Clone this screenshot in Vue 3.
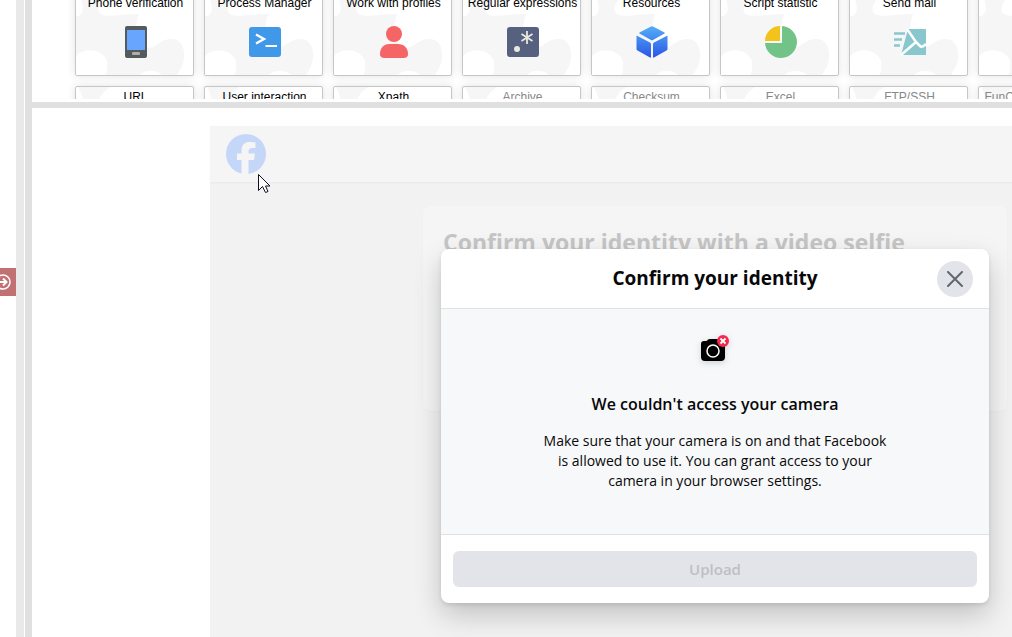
<template>
  <div class="workspace">
    <aside class="sidebar">
      <button class="expand-btn" type="button" aria-label="Expand panel">
        <svg width="16" height="16" viewBox="0 0 16 16" fill="none" stroke="#fff" stroke-width="1.5">
          <circle cx="8" cy="8" r="7" />
          <path d="M3 8h8M8 4.500l3.500 3.500L8 11.500" stroke-width="2" />
        </svg>
      </button>
    </aside>
    <div class="gutter"></div>
    <div class="divider"></div>

    <main class="main">
      <section class="palette">
        <div class="cards">
          <button
            v-for="item in modules"
            :key="item.id"
            type="button"
            class="card"
            :class="{ disabled: item.disabled }"
            :disabled="item.disabled"
          >
            <svg class="puzzle" viewBox="0 0 117 82" fill="#f6f6f6">
              <path d="M0 82V23C7 24 10 14 2 0H34C25 6 21 14 23 19C27 26 42 21 63 21C60 31 58 41 64 50C68 56 75 56 80 52C86 48 90 46 95 46C106 46 109 56 108 65C107 73 104 77 101 82H86C80 76 68 77 64 82H28C32 75 32 70 30 66C25 56 8 54 0 63Z" />
              <path d="M0 67C8 62 26 64 30 73C32 77 31 80 29 82H0Z" fill="#fff" />
            </svg>
            <span class="card-label">{{ item.label }}</span>

            <svg v-if="item.icon === 'phone'" class="card-icon" viewBox="0 0 32 32">
              <rect x="5" y="0" width="22" height="32" rx="2" fill="#555a5c" />
              <rect x="7" y="4" width="18" height="20" fill="#68a5ff" />
              <rect x="12" y="26" width="8" height="3" rx="1" fill="#b3ada8" />
            </svg>
            <svg v-else-if="item.icon === 'terminal'" class="card-icon" viewBox="0 0 32 32">
              <rect x="0" y="1" width="32" height="30" rx="3" fill="#3f98e8" />
              <path d="M7 8.500L15 13L7 17.500" fill="none" stroke="#fff" stroke-width="2.400" />
              <path d="M16.500 20H28" stroke="#fff" stroke-width="2" />
            </svg>
            <svg v-else-if="item.icon === 'profile'" class="card-icon" viewBox="0 0 32 32" fill="#f56565">
              <circle cx="16" cy="8" r="8" />
              <path d="M2 28C2 22 6 18 11 18H20C26 18 30 22 30 28C30 31 28 32 25 32H7C4 32 2 31 2 28Z" />
            </svg>
            <svg v-else-if="item.icon === 'regex'" class="card-icon" viewBox="0 0 32 32">
              <rect x="0" y="1" width="32" height="30" rx="3" fill="#56607f" />
              <circle cx="10" cy="23" r="3" fill="#e9e8df" />
              <path d="M20 5V18M14.500 8L25.500 15M25.500 8L14.500 15" stroke="#e9e8df" stroke-width="1.800" />
            </svg>
            <svg v-else-if="item.icon === 'cube'" class="card-icon" viewBox="0 0 32 32">
              <defs>
                <linearGradient id="cube-fill" gradientUnits="userSpaceOnUse" x1="0" y1="0" x2="0" y2="32">
                  <stop offset="0" stop-color="#54aef8" />
                  <stop offset="1" stop-color="#2b55e5" />
                </linearGradient>
              </defs>
              <g fill="url(#cube-fill)">
                <path d="M15 0.500Q16 0 17 0.500L28.500 6.500Q29 7 28.500 7.500L17 14Q16 14.500 15 14L3.500 7.500Q3 7 3.500 6.500Z" />
                <path d="M1.500 10L14 16.500Q15 17 15 18V31Q15 32 14 31.500L1.500 24.500Q0.500 24 0.500 23V10.500Q0.500 9.500 1.500 10Z" />
                <path d="M30.500 10L18 16.500Q17 17 17 18V31Q17 32 18 31.500L30.500 24.500Q31.500 24 31.500 23V10.500Q31.500 9.500 30.500 10Z" />
              </g>
            </svg>
            <svg v-else-if="item.icon === 'chart'" class="card-icon" viewBox="0 0 32 32">
              <path d="M17 0A16 16 0 1 1 0 17H17Z" fill="#72c387" />
              <path d="M15 0V15H0A15 15 0 0 1 15 0Z" fill="#f2c31a" />
            </svg>
            <svg v-else-if="item.icon === 'mail'" class="card-icon" viewBox="0 0 32 32">
              <path d="M14 3H32V29H7Z" fill="#89c7cf" />
              <path d="M13 3L22 16L7 29M21 15L26 20Q28 22 32 18" fill="none" stroke="#fff" stroke-width="2.500" />
              <path d="M0 7.500H11M0 13.500H8M0 19.500H6" stroke="#89c7cf" stroke-width="2.400" />
            </svg>
          </button>
        </div>
      </section>
      <div class="splitter"></div>

      <section class="browser">
        <div class="page">
          <header class="page-header">
            <a href="#" aria-label="Facebook">
              <svg width="40" height="40" viewBox="0 0 40 40">
                <circle cx="20" cy="20" r="20" fill="#c4d7f8" />
                <path d="M15.500 40V26H11V19.500H15.500V17C15.500 10.500 18.500 8 24 8C26 8 28.500 8.300 29.500 8.600V14H26.500C24 14 22.500 15 22.500 17.500V19.500H29L28 26H22.500V40Z" fill="#f5f5f5" />
              </svg>
            </a>
          </header>
          <div class="selfie-card">
            <h1>Confirm your identity with a video selfie</h1>
          </div>

          <div class="dialog" role="dialog" aria-labelledby="dialog-title">
            <header class="dialog-header">
              <h2 id="dialog-title">Confirm your identity</h2>
              <button class="close-btn" type="button" aria-label="Close">
                <svg width="16" height="16" viewBox="0 0 16 16" fill="none" stroke="#606770" stroke-width="2" stroke-linecap="round">
                  <path d="M1 1L15 15M15 1L1 15" />
                </svg>
              </button>
            </header>
            <div class="dialog-body">
              <svg class="camera" width="32" height="32" viewBox="0 0 32 32">
                <path d="M2 10Q2 7 5 7L7 7Q8 7 9 5.500Q9.500 5 11 5H18Q19.500 5 20 5.500Q21 7 22 7H23Q26 7 26 10V23Q26 27 22 27H6Q2 27 2 23Z" fill="#000" />
                <circle cx="14" cy="17" r="6" fill="none" stroke="#fff" stroke-width="1.500" />
                <circle cx="24" cy="7" r="6" fill="#f3294d" />
                <path d="M21.500 4.500L26.500 9.500M26.500 4.500L21.500 9.500" stroke="#fff" stroke-width="1.800" />
              </svg>
              <h3>We couldn't access your camera</h3>
              <p>
                Make sure that your camera is on and that Facebook<br />
                is allowed to use it. You can grant access to your<br />
                camera in your browser settings.
              </p>
            </div>
            <footer class="dialog-footer">
              <button class="upload-btn" type="button" disabled>Upload</button>
            </footer>
          </div>

          <svg class="pointer" width="13" height="20" viewBox="0 0 13 20">
            <path d="M0.500 0.500V16.500L4.500 12.500L7.500 18.500L10 17.500L7.500 12H12Z" fill="#fff" stroke="#101020" />
          </svg>
        </div>
      </section>
    </main>
  </div>
</template>

<script setup>
const modules = [
  { id: 1, label: 'Phone verification', icon: 'phone' },
  { id: 2, label: 'Process Manager', icon: 'terminal' },
  { id: 3, label: 'Work with profiles', icon: 'profile' },
  { id: 4, label: 'Regular expressions', icon: 'regex' },
  { id: 5, label: 'Resources', icon: 'cube' },
  { id: 6, label: 'Script statistic', icon: 'chart' },
  { id: 7, label: 'Send mail', icon: 'mail' },
  { id: 8, label: '' },
  { id: 9, label: 'URL' },
  { id: 10, label: 'User interaction' },
  { id: 11, label: 'Xpath' },
  { id: 12, label: 'Archive', disabled: true },
  { id: 13, label: 'Checksum', disabled: true },
  { id: 14, label: 'Excel', disabled: true },
  { id: 15, label: 'FTP/SSH', disabled: true },
  { id: 16, label: 'FunCaptcha by click', disabled: true }
]
</script>

<style>
body {
  margin: 0;
  background: #fff;
}
</style>

<style scoped>
.workspace {
  display: flex;
  height: 100vh;
  overflow: hidden;
  font-family: 'Open Sans', 'Noto Sans', sans-serif;
  color: #080809;
}

button {
  font-family: inherit;
  border: 0;
  padding: 0;
}

.sidebar {
  flex: 0 0 16px;
  overflow: hidden;
  padding-top: 268px;
}

.expand-btn {
  display: flex;
  align-items: center;
  justify-content: flex-end;
  width: 16px;
  height: 28px;
  padding-right: 5px;
  background: #c27172;
}

.expand-btn svg {
  flex: none;
}

.gutter {
  flex: 0 0 8px;
  margin-right: 1px;
  background: #e9e9e9;
}

.divider {
  flex: 0 0 7px;
  background: #e0e0e0;
}

.main {
  flex: 1;
  min-width: 0;
  display: flex;
  flex-direction: column;
}

.palette {
  flex: 0 0 99px;
  overflow: hidden;
}

/* the list is scrolled so the first visible row is cut off at the top */
.cards {
  display: grid;
  grid-template-columns: repeat(8, 119px);
  gap: 10px;
  margin-top: -8px;
  padding-left: 43px;
}

.card {
  position: relative;
  display: flex;
  flex-direction: column;
  align-items: center;
  gap: 15px;
  height: 84px;
  padding: 2px 0 0 2px;
  border: 1px solid #c6c6c6;
  border-radius: 2px;
  background: #fff;
  box-shadow: 0 0 8px rgba(0, 0, 0, 0.12);
  color: #000;
}

.card.disabled {
  color: #888;
}

.puzzle {
  position: absolute;
  inset: 0;
  width: 100%;
  height: 100%;
}

.card-label {
  position: relative;
  height: 16px;
  font: 12px/16px 'Liberation Sans', Arial, sans-serif;
  white-space: nowrap;
}

.card-icon {
  position: relative;
  width: 32px;
  height: 32px;
}

.splitter {
  flex: 0 0 6px;
  margin-top: 3px;
  background: #e0e0e0;
}

.browser {
  flex: 1;
  min-height: 0;
  overflow: hidden;
  padding: 18px 0 0 178px;
}

.page {
  position: relative;
  min-width: 1010px;
  height: 100%;
  background: #f2f2f2;
}

.page-header {
  display: flex;
  height: 40px;
  padding: 8px 16px;
  background: #f5f5f5;
  box-shadow: 0 1px 2px rgba(0, 0, 0, 0.04);
}

.selfie-card {
  box-sizing: border-box;
  width: 584px;
  height: 205px;
  margin: 24px auto 0;
  padding: 20px;
  border-radius: 8px;
  background: #f5f5f5;
  box-shadow: 0 1px 2px rgba(0, 0, 0, 0.02);
}

.selfie-card h1 {
  margin: 0;
  font-size: 23px;
  line-height: 32px;
  font-weight: 700;
  color: #c5c5c5;
}

.dialog {
  position: absolute;
  top: 123px;
  left: 50%;
  width: 548px;
  transform: translateX(-50%);
  border-radius: 8px;
  overflow: hidden;
  background: #fff;
  box-shadow: 0 12px 28px rgba(0, 0, 0, 0.2), 0 2px 4px rgba(0, 0, 0, 0.1);
}

.dialog-header {
  display: grid;
  grid-template-columns: 1fr auto 1fr;
  align-items: center;
  height: 59px;
  padding: 0 16px;
  border-bottom: 1px solid #dfe1e4;
}

.dialog-header h2 {
  grid-column: 2;
  margin: 0;
  padding-bottom: 2px;
  font-size: 19px;
  line-height: 24px;
  font-weight: 700;
}

.close-btn {
  justify-self: end;
  display: flex;
  align-items: center;
  justify-content: center;
  width: 36px;
  height: 36px;
  border-radius: 50%;
  background: #e3e4ea;
}

.dialog-body {
  display: flex;
  flex-direction: column;
  align-items: center;
  height: 200px;
  padding-top: 25px;
  background: #f7f8fa;
  text-align: center;
}

.camera {
  filter: drop-shadow(0 2px 3px rgba(0, 0, 0, 0.15));
}

.dialog-body h3 {
  margin: 28px 0 17px;
  font-size: 16px;
  line-height: 20px;
  font-weight: 600;
}

.dialog-body p {
  margin: 0;
  font-size: 14px;
  line-height: 20px;
}

.dialog-footer {
  padding: 16px 12px;
  border-top: 1px solid #dfe1e4;
}

.upload-btn {
  display: block;
  width: 100%;
  height: 36px;
  border-radius: 6px;
  background: #e3e4ea;
  color: #bcc0c4;
  font-size: 15px;
  line-height: 20px;
  font-weight: 600;
}

.pointer {
  position: absolute;
  top: 48px;
  left: 48px;
}
</style>
